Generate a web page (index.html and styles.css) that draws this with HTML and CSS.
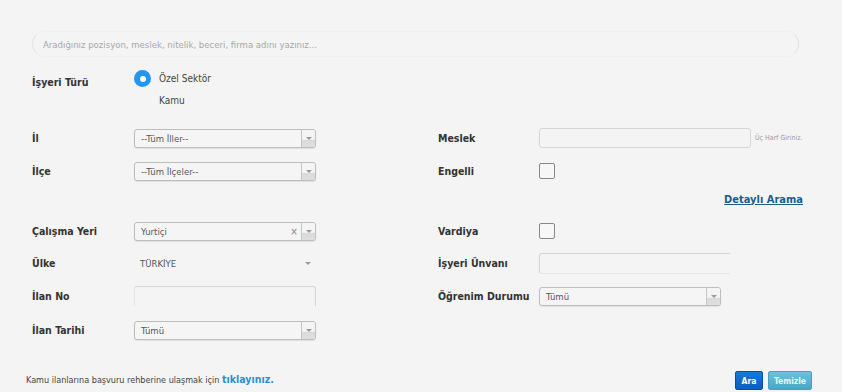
FILE: index.html
```html
<!DOCTYPE html>
<html lang="tr">
<head>
<meta charset="utf-8">
<title>İlan Arama</title>
<link rel="stylesheet" href="styles.css">
</head>
<body>
<div class="page">
  <div class="search">
    <span class="search-ph">Aradığınız pozisyon, meslek, nitelik, beceri, firma adını yazınız...</span>
  </div>

  <div class="type-row">
    <div class="label type-label">İşyeri Türü</div>
    <div class="radios">
      <div class="radio-item"><span class="radio on"></span><span>Özel Sektör</span></div>
      <div class="radio-item"><span class="radio-blank"></span><span>Kamu</span></div>
    </div>
  </div>

  <div class="form">
    <div class="label">İl</div>
    <div class="field"><div class="select"><span class="sel-text">--Tüm İller--</span><span class="sel-arrow"><span class="tri"></span></span></div></div>
    <div class="label">Meslek</div>
    <div class="field row"><div class="input meslek"></div><span class="hint">Üç Harf Giriniz.</span></div>

    <div class="label">İlçe</div>
    <div class="field"><div class="select"><span class="sel-text">--Tüm İlçeler--</span><span class="sel-arrow"><span class="tri"></span></span></div></div>
    <div class="label">Engelli</div>
    <div class="field"><span class="check"></span></div>

    <div class="empty"></div>
    <div class="empty"></div>
    <div class="detail-cell"><a class="detail" href="#">Detaylı Arama</a></div>

    <div class="label">Çalışma Yeri</div>
    <div class="field"><div class="select"><span class="sel-text">Yurtiçi</span><span class="clear">×</span><span class="sel-arrow"><span class="tri"></span></span></div></div>
    <div class="label">Vardiya</div>
    <div class="field"><span class="check"></span></div>

    <div class="label">Ülke</div>
    <div class="field"><div class="plain-select"><span class="sel-text">TÜRKİYE</span><span class="tri"></span></div></div>
    <div class="label">İşyeri Ünvanı</div>
    <div class="field"><div class="input unvan"></div></div>

    <div class="label">İlan No</div>
    <div class="field"><div class="input ilanno"></div></div>
    <div class="label">Öğrenim Durumu</div>
    <div class="field"><div class="select ogrenim"><span class="sel-text">Tümü</span><span class="sel-arrow"><span class="tri"></span></span></div></div>

    <div class="label">İlan Tarihi</div>
    <div class="field"><div class="select"><span class="sel-text">Tümü</span><span class="sel-arrow"><span class="tri"></span></span></div></div>
    <div class="empty"></div>
    <div class="empty"></div>
  </div>

  <div class="footer">
    <p class="note">Kamu ilanlarına başvuru rehberine ulaşmak için <a class="here" href="#">tıklayınız.</a></p>
    <div class="buttons">
      <button class="btn ara">Ara</button>
      <button class="btn temizle">Temizle</button>
    </div>
  </div>
</div>
</body>
</html>
```

FILE: styles.css
```css
* { box-sizing: border-box; }
html, body { margin: 0; padding: 0; }
body {
  background: #f4f4f4;
  font-family: "DejaVu Sans Condensed", "DejaVu Sans", Verdana, sans-serif;
  color: #333;
  width: 842px;
  height: 392px;
  overflow: hidden;
}
.page { padding: 31px 0 0 32px; }

.search {
  width: 767px;
  height: 26px;
  border: 1px solid #e2e2e2;
  border-top-color: #f0f0f0;
  border-bottom-color: #f0f0f0;
  border-radius: 13px;
  display: flex;
  align-items: center;
  padding-left: 10px;
}
.search-ph { font-size: 9.5px; color: #a8a8a8; }

.type-row {
  display: flex;
  margin-top: 13px;
  height: 51px;
}
.type-label { width: 102px; padding-top: 6px; }
.radios { display: flex; flex-direction: column; gap: 5px; font-size: 10px; color: #444; }
.radio-item { display: flex; align-items: center; gap: 8px; height: 17px; }
.radio {
  width: 17px; height: 17px; border-radius: 50%;
  background: #2196f3;
  display: flex; align-items: center; justify-content: center;
}
.radio::after { content: ""; width: 6px; height: 6px; border-radius: 50%; background: #fff; }
.radio-blank { width: 17px; height: 17px; }

.label { font-size: 10.5px; font-weight: bold; color: #333; }

.form {
  display: grid;
  grid-template-columns: 102px 304px 101px 1fr;
  grid-template-rows: 34px 32px 26px 36px 28px 38px 30px;
  align-items: center;
}
.field { display: flex; align-items: center; }
.field.row { gap: 4px; }
.detail-cell { grid-column: 3 / 5; text-align: right; padding-right: 39px; padding-bottom: 6px; }
.detail {
  font-size: 11px; font-weight: bold; color: #1b5e8c; text-decoration: underline;
}

.select {
  width: 182px; height: 19px;
  border: 1px solid #bdbdbd;
  border-radius: 3px;
  background: #f5f5f5;
  display: flex; align-items: center;
  box-shadow: 0 1px 1px rgba(0,0,0,0.08);
}
.select.ogrenim { width: 182px; }
.sel-text { flex: 1; font-size: 9.5px; color: #555; padding-left: 6px; }
.clear { font-size: 10px; color: #888; width: 14px; text-align: center; }
.sel-arrow {
  width: 14px; height: 100%;
  border-left: 1px solid #c4c4c4;
  display: flex; align-items: center; justify-content: center;
  background: linear-gradient(#f4f4f4 0, #f4f4f4 55%, #dadada 60%, #dedede 100%);
  border-radius: 0 2px 2px 0;
}
.tri {
  width: 0; height: 0;
  border-left: 3px solid transparent;
  border-right: 3px solid transparent;
  border-top: 3px solid #999;
}
.plain-select {
  width: 182px; height: 19px; display: flex; align-items: center; padding-right: 5px;
}

.input {
  height: 20px; border: 1px solid #d6d6d6; border-radius: 3px; background: #f4f4f4;
}
.input.meslek { width: 212px; }
.input.unvan {
  width: 191px; height: 21px; border-right: none; border-bottom-color: #e6e6e6;
  border-radius: 3px 0 0 3px;
}
.input.ilanno {
  width: 182px; height: 20px; border-bottom: none; border-left-color: #e4e4e4;
  border-radius: 3px 3px 0 0;
}
.hint { font-size: 7px; color: #999; }

.check {
  width: 16px; height: 16px; border: 1px solid #888; border-radius: 2px; background: #f7f7f7;
  display: block;
}

.footer {
  display: flex; align-items: flex-end; justify-content: space-between;
  margin-top: 26px; margin-left: -6px; width: 786px;
}
.note { margin: 0 0 5px; font-size: 9px; color: #444; }
.here { font-size: 10.5px; font-weight: bold; color: #2e8fd0; text-decoration: none; }
.buttons { display: flex; gap: 5px; }
.btn {
  height: 19px; border-radius: 2px; border: 1px solid; font-family: inherit;
  font-size: 8.5px; font-weight: bold; color: #fff; padding: 0;
}
.btn.ara {
  width: 28px; background: linear-gradient(#1a78d8, #0c5cc4); border-color: #0a4ea8;
}
.btn.temizle {
  width: 44px; background: linear-gradient(#6bc2dd, #4aa6c6); border-color: #4d9dbd; color: #e6f3f8;
}
```
